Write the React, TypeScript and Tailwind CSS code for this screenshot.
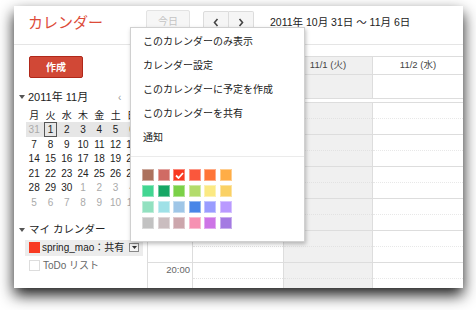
import React from 'react';

const font = "font-['Liberation_Sans','Noto_Sans_CJK_JP',sans-serif]";

const weekDays = ['月', '火', '水', '木', '金', '土', '日'];

// [day, isOtherMonth]
const miniRows: [number, boolean][][] = [
  [[31, true], [1, false], [2, false], [3, false], [4, false], [5, false], [6, false]],
  [[7, false], [8, false], [9, false], [10, false], [11, false], [12, false], [13, false]],
  [[14, false], [15, false], [16, false], [17, false], [18, false], [19, false], [20, false]],
  [[21, false], [22, false], [23, false], [24, false], [25, false], [26, false], [27, false]],
  [[28, false], [29, false], [30, false], [1, true], [2, true], [3, true], [4, true]],
  [[5, true], [6, true], [7, true], [8, true], [9, true], [10, true], [11, true]],
];

const palette = [
  ['#ac725e', '#d06b64', '#f83a22', '#fa573c', '#ff7537', '#ffad46'],
  ['#42d692', '#16a765', '#7bd148', '#b3dc6c', '#fbe983', '#fad165'],
  ['#92e1c0', '#9fe1e7', '#9fc6e7', '#4986e7', '#9a9cff', '#b99aff'],
  ['#c2c2c2', '#cabdbf', '#cca6ac', '#f691b2', '#cd74e6', '#a47ae2'],
];

const menuItems = [
  'このカレンダーのみ表示',
  'カレンダー設定',
  'このカレンダーに予定を作成',
  'このカレンダーを共有',
  '通知',
];

const hours = ['15:00', '16:00', '17:00', '18:00', '19:00', '20:00'];

function Header() {
  return (
    <div className="h-[39px] shrink-0 border-b border-[#e5e5e5] flex items-start">
      <div className="ml-[14px] w-[118px] mt-[7px] text-[15px] leading-[20px] text-[#dd4b39]">カレンダー</div>
      <div className="mt-[4px] w-[44px] h-[23px] rounded-[2px] border border-[#e3e3e3] bg-[#f6f6f6] flex items-center justify-center text-[10px] text-[#c4c4c4]">
        今日
      </div>
      <div className="ml-[13px] mt-[5px] flex h-[22px]">
        <div className="w-[26px] h-full rounded-l-[2px] border border-[#dcdcdc] bg-[#f5f5f5] flex items-center justify-center">
          <svg width="8" height="9" viewBox="0 0 8 9">
            <path d="M5.5 1 L2.5 4.5 L5.5 8" fill="none" stroke="#444" strokeWidth="1.6" />
          </svg>
        </div>
        <div className="w-[25px] h-full rounded-r-[2px] border border-l-0 border-[#dcdcdc] bg-[#f5f5f5] flex items-center justify-center">
          <svg width="8" height="9" viewBox="0 0 8 9">
            <path d="M2.5 1 L5.5 4.5 L2.5 8" fill="none" stroke="#444" strokeWidth="1.6" />
          </svg>
        </div>
      </div>
      <div className="ml-[16px] mt-[9px] text-[10.5px] leading-[14px] text-[#222] whitespace-nowrap">
        2011年 10月 31日 〜 11月 6日
      </div>
    </div>
  );
}

function Sidebar() {
  return (
    <div className="w-[133px] shrink-0 flex flex-col">
      <div className="ml-[15px] mt-[11px] w-[54px] h-[22px] rounded-[2px] border border-[#b0281a] bg-[#d14836] flex items-center justify-center text-[10px] font-bold text-white">
        作成
      </div>

      <div className="mt-[11px] h-[16px] flex items-center">
        <svg className="ml-[5px] mr-[3px]" width="6" height="4" viewBox="0 0 6 4">
          <path d="M0 0 L6 0 L3 4 Z" fill="#555" />
        </svg>
        <span className="w-[90px] text-[11px] text-[#222] whitespace-nowrap">2011年 11月</span>
        <span className="text-[10px] text-[#999]">‹</span>
      </div>

      <div className="mt-[3px] ml-[12px] grid grid-cols-[repeat(7,16.3px)]">
        {weekDays.map((d) => (
          <div key={d} className="h-[14px] flex items-center justify-center text-[10px] text-[#222]">
            {d}
          </div>
        ))}
      </div>
      <div className="ml-[12px] flex flex-col">
        {miniRows.map((row, ri) => (
          <div
            key={ri}
            className={`grid grid-cols-[repeat(7,16.3px)] h-[14.6px] ${ri === 0 ? 'bg-[#e6e6e6]' : ''}`}
          >
            {row.map(([n, other], ci) => (
              <div
                key={ci}
                className={`flex items-center justify-center text-[10px] ${
                  other ? 'text-[#aaa]' : 'text-[#222]'
                }`}
              >
                {ri === 0 && ci === 1 ? (
                  <span className="w-[13px] h-[15px] border-[1.5px] border-[#555] flex items-center justify-center">
                    {n}
                  </span>
                ) : (
                  n
                )}
              </div>
            ))}
          </div>
        ))}
      </div>

      <div className="mt-[12px] h-[16px] flex items-center">
        <svg className="ml-[5px] mr-[4px]" width="6" height="4" viewBox="0 0 6 4">
          <path d="M0 0 L6 0 L3 4 Z" fill="#555" />
        </svg>
        <span className="text-[10.5px] text-[#222] whitespace-nowrap">マイ カレンダー</span>
      </div>

      <div className="mt-[2px] ml-[11px] w-[118px] h-[16px] bg-[#ececec] flex items-center">
        <span className="ml-[4px] w-[11px] h-[11px] bg-[#f83a22]" />
        <span className="ml-[2px] w-[87px] text-[10px] text-[#222] whitespace-nowrap">spring_mao：共有</span>
        <span className="w-[10px] h-[9px] border border-[#888] bg-[#f4f4f4] flex items-center justify-center">
          <svg width="5" height="3" viewBox="0 0 5 3">
            <path d="M0 0 L5 0 L2.5 3 Z" fill="#333" />
          </svg>
        </span>
      </div>

      <div className="mt-[2px] ml-[11px] h-[16px] flex items-center">
        <span className="ml-[4px] w-[11px] h-[11px] border border-[#ddd] bg-white" />
        <span className="ml-[3px] text-[10px] text-[#666] whitespace-nowrap">ToDo リスト</span>
      </div>
    </div>
  );
}

function WeekGrid() {
  const cols = 'grid grid-cols-[44px_91px_89px_1fr]';
  return (
    <div className="flex-1 flex flex-col border-l border-[#dddddd] overflow-hidden">
      <div className="h-[11px] shrink-0" />
      <div className={`${cols} h-[19px] shrink-0 border-t border-b border-[#dddddd]`}>
        <div />
        <div className="border-l border-[#dddddd] flex items-center justify-center text-[9.5px] text-[#444]">10/31 (月)</div>
        <div className="border-l border-[#dddddd] bg-[#f0f0f0] flex items-center justify-center text-[9.5px] text-[#444]">11/1 (火)</div>
        <div className="border-l border-[#dddddd] flex items-center justify-center text-[9.5px] text-[#444]">11/2 (水)</div>
      </div>
      <div className={`${cols} h-[24px] shrink-0 border-b border-[#dddddd]`}>
        <div />
        <div className="border-l border-[#dddddd]" />
        <div className="border-l border-[#dddddd] bg-[#f0f0f0]" />
        <div className="border-l border-[#dddddd]" />
      </div>
      <div className="h-[4px] shrink-0 border-b border-[#dddddd]" />
      {hours.map((h) => (
        <div key={h} className={`${cols} h-[32px] shrink-0 border-b border-[#dddddd]`}>
          <div className="text-right pr-[2px] pt-[1px] text-[9.5px] leading-[11px] text-[#666]">{h}</div>
          <div className="border-l border-[#dddddd]">
            <div className="h-[16px] border-b border-dotted border-[#e2e2e2]" />
          </div>
          <div className="border-l border-[#dddddd] bg-[#f0f0f0]">
            <div className="h-[16px] border-b border-dotted border-[#e2e2e2]" />
          </div>
          <div className="border-l border-[#dddddd]">
            <div className="h-[16px] border-b border-dotted border-[#e8e8e8]" />
          </div>
        </div>
      ))}
    </div>
  );
}

function CalendarMenu() {
  return (
    <div className="absolute left-[116px] top-[21px] w-[175px] h-[215px] bg-white border border-[#d0d0d0] shadow-[1px_2px_4px_rgba(0,0,0,0.25)] pt-[1px]">
      {menuItems.map((item) => (
        <div key={item} className="h-[24px] pl-[12px] flex items-center text-[10px] text-[#222] whitespace-nowrap">
          {item}
        </div>
      ))}
      <div className="mt-[7px] border-t border-[#ebebeb]" />
      <div className="pt-[12px] pl-[11px] flex flex-col gap-[4px]">
        {palette.map((row, ri) => (
          <div key={ri} className="flex gap-[3.5px]">
            {row.map((c, ci) => (
              <div
                key={c}
                className="w-[12px] h-[12px] border border-white/40 flex items-center justify-center"
                style={{ backgroundColor: c }}
              >
                {ri === 0 && ci === 2 && (
                  <svg width="9" height="7" viewBox="0 0 9 7">
                    <path d="M1 3.5 L3.5 6 L8 1" fill="none" stroke="#fff" strokeWidth="1.8" />
                  </svg>
                )}
              </div>
            ))}
          </div>
        ))}
      </div>
    </div>
  );
}

export default function App() {
  return (
    <div className={`w-[476px] h-[310px] bg-white pl-[14px] pt-[6px] overflow-hidden ${font}`}>
      <div className="relative w-[449px] h-[282px] bg-white shadow-[0_7px_14px_rgba(0,0,0,0.9)] flex flex-col">
        <Header />
        <div className="flex-1 flex overflow-hidden">
          <Sidebar />
          <WeekGrid />
        </div>
        <CalendarMenu />
      </div>
    </div>
  );
}
